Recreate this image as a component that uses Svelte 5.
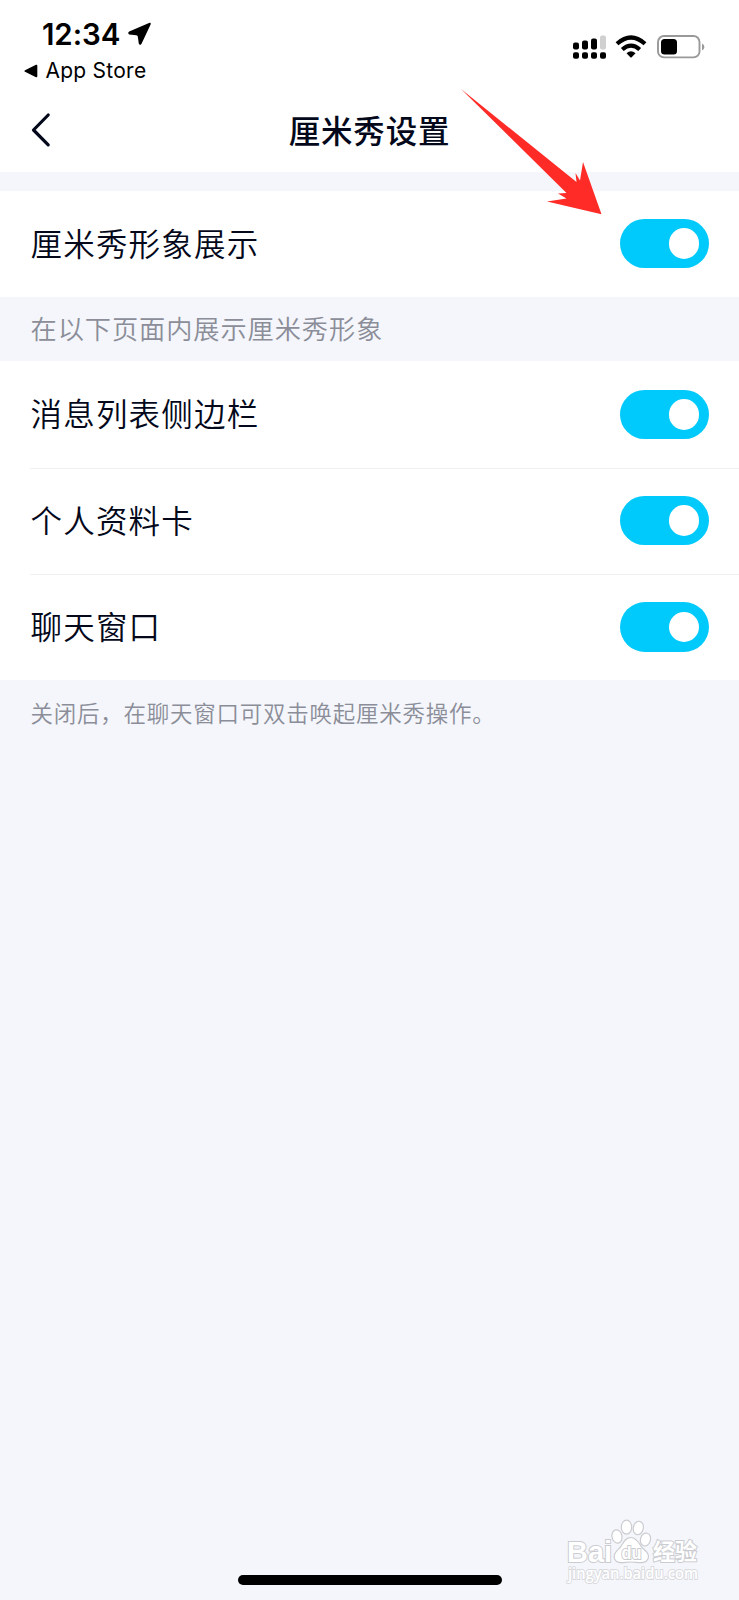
<script lang="ts">
    let master = $state(true);
    let pages = $state([
        { label: "消息列表侧边栏", on: true },
        { label: "个人资料卡", on: true },
        { label: "聊天窗口", on: true },
    ]);

    const bars = [7, 9, 11, 14];
</script>

{#snippet toggle(on: boolean, label: string, flip: () => void)}
    <button
        class="switch"
        class:on
        role="switch"
        aria-checked={on}
        aria-label={label}
        onclick={flip}
    >
        <span class="knob"></span>
    </button>
{/snippet}

<main>
    <header>
        <div class="status">
            <div class="status-left">
                <div class="time">
                    <span>12:34</span>
                    <svg width="24" height="24" viewBox="0 0 24 24">
                        <path
                            d="M21.6 .8 L1.2 9.6 Q-.8 11 1.2 12.4 L8.4 13.2 Q9.6 13.4 9.8 14.6 L10.8 21.8 Q12 23.8 13.4 21.9 L22.6 2.4 Q23.2 .5 21.6 .8Z"
                        />
                    </svg>
                </div>
                <div class="return">
                    <svg width="14" height="14" viewBox="0 0 14 14">
                        <path d="M1 6.2 L12 .8 Q13.3 .4 13.3 1.7 V12.3 Q13.3 13.6 12 13.2 L1 7.8 Q-.2 7 1 6.2Z" />
                    </svg>
                    <span>App Store</span>
                </div>
            </div>
            <div class="status-right">
                <svg width="33" height="25" viewBox="0 0 33 25">
                    {#each bars as h, i}
                        <rect
                            x={i * 9}
                            y={14.5 - h}
                            width="6"
                            height={h}
                            rx="2"
                            fill={i === 3 ? "#d0d0d0" : "#000"}
                        />
                        <rect x={i * 9} y="17.2" width="6" height="6.6" rx="2" />
                    {/each}
                </svg>
                <svg class="wifi" width="32" height="24" viewBox="0 0 32 24">
                    <g fill="none" stroke="#000" stroke-width="4.2">
                        <path d="M2 8.7 Q16 -3.8 30 8.7" />
                        <path d="M7.3 14.5 Q16 6.8 24.7 14.500" />
                    </g>
                    <path d="M11.500 18.2 Q16 14.2 20.500 18.2 L16.7 22.3 Q16 22.9 15.3 22.3Z" />
                </svg>
                <svg width="48" height="24" viewBox="0 0 48 24">
                    <rect x="1" y="1" width="41.5" height="21.4" rx="6" fill="none" stroke="#999" stroke-width="1.9" />
                    <rect x="4" y="4" width="16" height="15.5" rx="3.5" />
                    <path d="M45 8.5 Q47.4 9.6 47.4 12 T45 15.4Z" fill="#999" />
                </svg>
            </div>
        </div>
        <nav>
            <button class="back" aria-label="返回">
                <svg width="20" height="36" viewBox="0 0 20 36">
                    <path
                        d="M17.2 3 L2.5 18 L17.2 32.8"
                        fill="none"
                        stroke="#03081a"
                        stroke-width="3.2"
                        stroke-linecap="round"
                        stroke-linejoin="round"
                    />
                </svg>
            </button>
            <h1>厘米秀设置</h1>
        </nav>
    </header>

    <section class="group first">
        <div class="row">
            <span>厘米秀形象展示</span>
            {@render toggle(master, "厘米秀形象展示", () => (master = !master))}
        </div>
    </section>

    <h2>在以下页面内展示厘米秀形象</h2>

    <section class="group">
        {#each pages as page}
            <div class="row">
                <span>{page.label}</span>
                {@render toggle(page.on, page.label, () => (page.on = !page.on))}
            </div>
        {/each}
    </section>

    <p class="note">关闭后，在聊天窗口可双击唤起厘米秀操作。</p>

    <div class="home-bar"></div>

    <svg class="arrow" width="142" height="127" viewBox="0 0 142 127">
        <path
            d="M0 0 L115.5 93 L114.5 84 L119 91.5 L122 73 L140.5 125.3 L86 112.5 L105.5 109.5 L97 104.5 L105.5 104Z"
            fill="#ff2b27"
        />
    </svg>

    <svg class="watermark" width="150" height="78" viewBox="0 0 150 78">
        <g fill="#fff" stroke="#cbccd0" stroke-width="1.2">
            <ellipse cx="55" cy="21.5" rx="5" ry="6.7" transform="rotate(-12 55 21.5)" />
            <ellipse cx="64.5" cy="12.2" rx="5.2" ry="7" />
            <ellipse cx="76.3" cy="13" rx="5" ry="6.8" transform="rotate(12 76.3 13)" />
            <ellipse cx="83.5" cy="24.500" rx="5" ry="6.5" transform="rotate(16 83.5 24.5)" />
            <path
                d="M69 22.5 C75 22.5 77 29 80.5 33 C85 37 88 40 86 44 C83.5 49.5 76 47 69 47 C62 47 55 49.5 52.5 44 C50.5 39 55 36 58.5 32 C61.5 28 63 22.5 69 22.5Z"
            />
        </g>
        <g class="outlined">
            <text x="5" y="46.5" font-size="30" textLength="45" lengthAdjust="spacingAndGlyphs">Bai</text>
            <text x="59.5" y="43.5" font-size="18" textLength="20" lengthAdjust="spacingAndGlyphs">du</text>
            <text class="cjk" x="91" y="45" font-size="22.5" textLength="44" lengthAdjust="spacingAndGlyphs">经验</text>
            <text class="url" x="6" y="64" font-size="16" textLength="130" lengthAdjust="spacingAndGlyphs">jingyan.baidu.com</text>
        </g>
    </svg>
</main>

<style>
    :global(body) {
        background: #f4f6fb;
    }

    main {
        position: relative;
        box-sizing: border-box;
        height: 1600px;
        display: flex;
        flex-direction: column;
        overflow: hidden;
        background: #f4f6fb;
        color: #03081a;
        font-family: "Noto Sans CJK SC", sans-serif;
    }

    header {
        height: 172px;
        background: #fff;
    }

    .status {
        display: flex;
        justify-content: space-between;
        height: 88px;
        color: #000;
        font-family: Inter, sans-serif;
    }

    .status-left {
        padding: 16px 0 0 24px;
    }

    .time {
        display: flex;
        align-items: center;
        gap: 8px;
        height: 35px;
        padding-left: 18px;
        font-size: 29.5px;
        font-weight: 600;
        letter-spacing: -0.1px;
    }

    .return {
        display: flex;
        align-items: center;
        gap: 7.5px;
        height: 39px;
        font-size: 21px;
        letter-spacing: 0.25px;
    }

    .status-right {
        display: flex;
        align-items: flex-start;
        padding: 35px 34px 0 0;
    }

    .wifi {
        margin: 0 10px 0 9.5px;
    }

    nav {
        position: relative;
        display: flex;
        align-items: center;
        justify-content: center;
        height: 82px;
    }

    h1 {
        margin: 0;
        font-size: 31.5px;
        line-height: 44px;
        font-weight: 500;
        letter-spacing: 0.8px;
    }

    button {
        padding: 0;
        border: none;
        cursor: pointer;
    }

    .back {
        position: absolute;
        left: 31px;
        top: 24px;
        height: 36px;
        background: none;
    }

    .group {
        background: #fff;
    }

    .first {
        margin-top: 18.5px;
    }

    .row {
        position: relative;
        display: flex;
        align-items: center;
        justify-content: space-between;
        height: 106.3px;
        padding: 0 30px;
        font-size: 31.5px;
        font-weight: 350;
        letter-spacing: 1.2px;
    }

    .row > span {
        padding: 0 0 4px 0.5px;
    }

    .row + .row::before {
        content: "";
        position: absolute;
        top: 0;
        left: 30px;
        right: 0;
        height: 1px;
        background: #eff0f2;
    }

    .switch {
        width: 89px;
        height: 49.5px;
        padding: 0 10px;
        display: flex;
        align-items: center;
        border-radius: 25px;
        background: #d5d7de;
    }

    .switch.on {
        justify-content: flex-end;
        background: #00cafc;
    }

    .knob {
        width: 30.5px;
        height: 30.5px;
        border-radius: 50%;
        background: #fff;
    }

    h2 {
        height: 64.5px;
        margin: 0;
        padding: 0 30.5px;
        font-size: 26.2px;
        line-height: 62.5px;
        font-weight: 350;
        letter-spacing: 0.95px;
        color: #8b8d98;
    }

    .note {
        margin: 15px 0 0;
        padding: 0 30.5px;
        font-size: 22.5px;
        line-height: 34px;
        font-weight: 350;
        letter-spacing: 0.75px;
        color: #8b8d98;
    }

    .home-bar {
        width: 264px;
        height: 10px;
        margin: auto auto 15px;
        border-radius: 5px;
        background: #000;
    }

    .arrow {
        position: absolute;
        left: 461px;
        top: 89px;
    }

    .watermark {
        position: absolute;
        left: 562px;
        top: 1515px;
    }

    .outlined {
        fill: #fff;
        stroke: #cbccd0;
        stroke-width: 2px;
        paint-order: stroke;
        font-family: "Liberation Sans", sans-serif;
        font-weight: 700;
    }

    .cjk {
        font-family: "Noto Sans CJK SC", sans-serif;
    }

    .url {
        font-family: "Open Sans", sans-serif;
        font-weight: 600;
        stroke: #d8d9dd;
        stroke-width: 1.8px;
    }
</style>
